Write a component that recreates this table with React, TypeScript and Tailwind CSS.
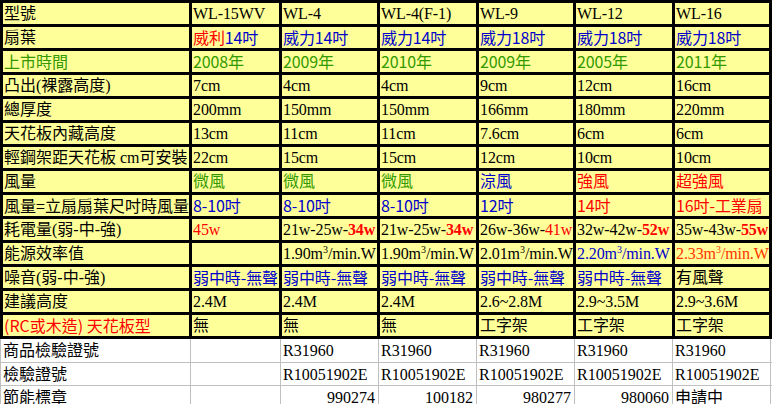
import type { ReactNode } from 'react';

// font stacks: Latin in a Times-like serif, CJK falls through to Noto Sans CJK
const SERIF = "font-['Liberation_Serif','Noto_Sans_CJK_TC',serif]";
const SANS = "font-['Noto_Sans_CJK_TC','Liberation_Sans',sans-serif]";

const BLUE = 'text-[#0000cc]';
const GREEN = 'text-[#339900]';
const RED = 'text-[#ff0000]';

type Cell = { content?: ReactNode; cls?: string };

const watt = (base: string, peak: string, bold = true) => (
  <>
    {base}
    <span className={bold ? 'font-bold text-[#ff0000]' : 'text-[#ff0000]'}>{peak}</span>
  </>
);

const efficiency = (v: string) => (
  <>
    {v}m<span className="relative -top-[6px] text-[10px] leading-none">3</span>/min.W
  </>
);

const same = (text: string, n: number, cls?: string): Cell[] =>
  Array.from({ length: n }, () => ({ content: text, cls }));

const specRows: { label: ReactNode; labelCls?: string; cells: Cell[] }[] = [
  {
    label: '型號',
    cells: [
      { content: 'WL-15WV' },
      { content: 'WL-4' },
      { content: 'WL-4(F-1)' },
      { content: 'WL-9' },
      { content: 'WL-12' },
      { content: 'WL-16' },
    ],
  },
  {
    label: '扇葉',
    cells: [
      {
        content: (
          <>
            <span className="text-[#ff0000]">威利</span>
            <span className="text-[#0000cc]">14吋</span>
          </>
        ),
        cls: SANS,
      },
      { content: '威力14吋', cls: `${SANS} ${BLUE}` },
      { content: '威力14吋', cls: `${SANS} ${BLUE}` },
      { content: '威力18吋', cls: `${SANS} ${BLUE}` },
      { content: '威力18吋', cls: `${SANS} ${BLUE}` },
      { content: '威力18吋', cls: `${SANS} ${BLUE}` },
    ],
  },
  {
    label: '上市時間',
    labelCls: `${SANS} ${GREEN}`,
    cells: ['2008年', '2009年', '2010年', '2009年', '2005年', '2011年'].map((t) => ({
      content: t,
      cls: `${SANS} ${GREEN}`,
    })),
  },
  {
    label: '凸出(裸露高度)',
    cells: ['7cm', '4cm', '4cm', '9cm', '12cm', '16cm'].map((t) => ({ content: t })),
  },
  {
    label: '總厚度',
    cells: ['200mm', '150mm', '150mm', '166mm', '180mm', '220mm'].map((t) => ({ content: t })),
  },
  {
    label: '天花板內藏高度',
    cells: ['13cm', '11cm', '11cm', '7.6cm', '6cm', '6cm'].map((t) => ({ content: t })),
  },
  {
    label: '輕鋼架距天花板 cm可安裝',
    cells: ['22cm', '15cm', '15cm', '12cm', '10cm', '10cm'].map((t) => ({ content: t })),
  },
  {
    label: '風量',
    cells: [
      ...same('微風', 3, GREEN),
      { content: '涼風', cls: BLUE },
      { content: '強風', cls: RED },
      { content: '超強風', cls: RED },
    ],
  },
  {
    label: '風量=立扇扇葉尺吋時風量',
    labelCls: SANS,
    cells: [
      ...same('8-10吋', 3, `${SANS} ${BLUE}`),
      { content: '12吋', cls: `${SANS} ${BLUE}` },
      { content: '14吋', cls: `${SANS} ${RED}` },
      { content: '16吋-工業扇', cls: `${SANS} ${RED}` },
    ],
  },
  {
    label: '耗電量(弱-中-強)',
    cells: [
      { content: '45w', cls: RED },
      { content: watt('21w-25w-', '34w') },
      { content: watt('21w-25w-', '34w') },
      { content: watt('26w-36w-', '41w', false) },
      { content: watt('32w-42w-', '52w') },
      { content: watt('35w-43w-', '55w') },
    ],
  },
  {
    label: '能源效率值',
    cells: [
      {},
      { content: efficiency('1.90') },
      { content: efficiency('1.90') },
      { content: efficiency('2.01') },
      { content: efficiency('2.20'), cls: BLUE },
      { content: efficiency('2.33'), cls: 'text-[#ff3300]' },
    ],
  },
  {
    label: '噪音(弱-中-強)',
    cells: [...same('弱中時-無聲', 5, `${SANS} ${BLUE}`), { content: '有風聲' }],
  },
  {
    label: '建議高度',
    cells: ['2.4M', '2.4M', '2.4M', '2.6~2.8M', '2.9~3.5M', '2.9~3.6M'].map((t) => ({ content: t })),
  },
  {
    label: '(RC或木造) 天花板型',
    labelCls: `${SANS} ${RED}`,
    cells: [...same('無', 3), ...same('工字架', 3)],
  },
];

const certRows: { label: string; cells: Cell[] }[] = [
  { label: '商品檢驗證號', cells: [{}, ...same('R31960', 5)] },
  { label: '檢驗證號', cells: [{}, ...same('R10051902E', 5)] },
  {
    label: '節能標章',
    cells: [
      {},
      { content: '990274', cls: 'text-right pr-[3px]' },
      { content: '100182', cls: 'text-right pr-[3px]' },
      { content: '980277', cls: 'text-right pr-[3px]' },
      { content: '980060', cls: 'text-right pr-[3px]' },
      { content: '申請中', cls: 'pl-[2px]' },
    ],
  },
];

export default function App() {
  return (
    <div className={`w-[772px] h-[404px] overflow-hidden bg-white text-black text-[16px] ${SERIF}`}>
      {/* spec table: yellow cells with thick black rules */}
      <div className="grid grid-cols-[186px_87px_95px_96px_94px_96px_94px] auto-rows-[21px] gap-[3px] bg-black p-[3px]">
        {specRows.map((row, r) => (
          <div key={r} className="contents">
            <div className={`bg-[#ffff99] whitespace-nowrap pl-px leading-[21px] ${row.labelCls ?? ''}`}>
              {row.label}
            </div>
            {row.cells.map((c, i) => (
              <div
                key={i}
                className={`bg-[#ffff99] whitespace-nowrap pl-px leading-[21px] tracking-[-0.1px] ${c.cls ?? ''}`}
              >
                {c.content}
              </div>
            ))}
          </div>
        ))}
      </div>

      {/* certification rows: plain sheet gridlines */}
      <div className="grid grid-cols-[189px_89px_97px_97px_97px_97px_97px_1px] grid-rows-[23px_22px_22px] gap-px bg-[#c0c0c0] pl-px">
        {certRows.map((row, r) => (
          <div key={r} className="contents">
            <div className="bg-white whitespace-nowrap pl-[2px] leading-[23px]">{row.label}</div>
            {row.cells.map((c, i) => (
              <div key={i} className={`bg-white whitespace-nowrap leading-[23px] ${c.cls ?? 'pl-[2px]'}`}>
                {c.content}
              </div>
            ))}
            <div className="bg-white" />
          </div>
        ))}
      </div>
    </div>
  );
}
